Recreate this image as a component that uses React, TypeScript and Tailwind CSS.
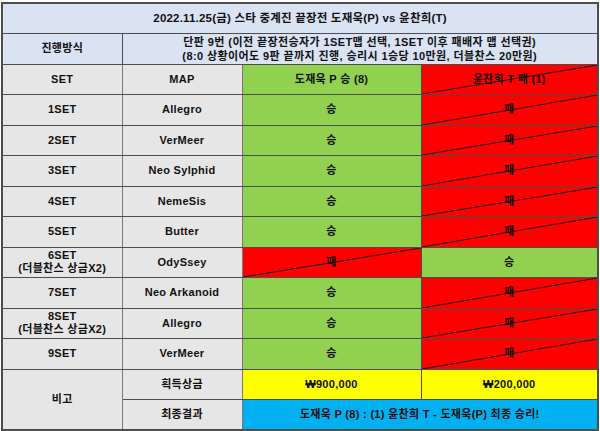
const font = "font-['Liberation_Sans','Noto_Sans_CJK_KR',sans-serif]";

const sets = [
  { set: "1SET", map: "Allegro", win: true },
  { set: "2SET", map: "VerMeer", win: true },
  { set: "3SET", map: "Neo Sylphid", win: true },
  { set: "4SET", map: "NemeSis", win: true },
  { set: "5SET", map: "Butter", win: true },
  { set: "6SET", map: "OdySsey", win: false, note: "(더블찬스 상금X2)" },
  { set: "7SET", map: "Neo Arkanoid", win: true },
  { set: "8SET", map: "Allegro", win: true, note: "(더블찬스 상금X2)" },
  { set: "9SET", map: "VerMeer", win: true },
];

const cell = "border border-[#4d4d4d] text-center align-middle p-0";
const gray = `${cell} bg-[#e7e6e6] border-x-[#7a7a7a]`;

const Slash = () => (
  <svg className="absolute inset-0 w-full h-full" preserveAspectRatio="none" viewBox="0 0 100 100">
    <line x1="0" y1="100" x2="100" y2="0" stroke="#1a1a1a" strokeWidth="1" vectorEffect="non-scaling-stroke" />
  </svg>
);

const Lose = ({ children }: { children: React.ReactNode }) => (
  <td className={`${cell} bg-[#ff0000] relative`}>
    <Slash />
    <span className="relative">{children}</span>
  </td>
);

const Win = ({ children }: { children: React.ReactNode }) => (
  <td className={`${cell} bg-[#92d050]`}>{children}</td>
);

export default function App() {
  return (
    <div className={`w-[600px] h-[431px] bg-white pt-[2px] pl-[1px] ${font}`}>
      <table className="w-[596px] table-fixed border-collapse border-2 border-[#4d4d4d] text-[11px] font-bold text-[#111] tracking-[0.3px]">
        <colgroup>
          <col className="w-[120px]" />
          <col className="w-[120px]" />
          <col className="w-[179px]" />
          <col className="w-[177px]" />
        </colgroup>
        <tbody>
          <tr className="h-[30px]">
            <td colSpan={4} className={`${cell} bg-[#dae3f3] text-[11.5px] tracking-[0.2px]`}>
              2022.11.25(금) 스타 중계진 끝장전 도재욱(P) vs 윤찬희(T)
            </td>
          </tr>
          <tr className="h-[31px]">
            <td className={`${cell} bg-[#dae3f3]`}>진행방식</td>
            <td colSpan={3} className={`${cell} bg-[#dae3f3] leading-[14px] tracking-[0.4px]`}>
              단판 9번 (이전 끝장전승자가 1SET맵 선택, 1SET 이후 패배자 맵 선택권)
              <br />
              (8:0 상황이어도 9판 끝까지 진행, 승리시 1승당 10만원, 더블찬스 20만원)
            </td>
          </tr>
          <tr className="h-[30px]">
            <td className={gray}>SET</td>
            <td className={gray}>MAP</td>
            <Win>도재욱 P 승 (8)</Win>
            <Lose>윤찬희 T 패 (1)</Lose>
          </tr>
          {sets.map((s, i) => (
            <tr key={s.set} className={i % 2 === 0 ? "h-[31px]" : "h-[30px]"}>
              <td className={`${gray} leading-[13px]`}>
                {s.set}
                {s.note && (
                  <>
                    <br />
                    {s.note}
                  </>
                )}
              </td>
              <td className={gray}>{s.map}</td>
              {s.win ? <Win>승</Win> : <Lose>패</Lose>}
              {s.win ? <Lose>패</Lose> : <Win>승</Win>}
            </tr>
          ))}
          <tr className="h-[30px]">
            <td rowSpan={2} className={gray}>비고</td>
            <td className={gray}>획득상금</td>
            <td className={`${cell} bg-[#ffff00]`}>₩900,000</td>
            <td className={`${cell} bg-[#ffff00]`}>₩200,000</td>
          </tr>
          <tr className="h-[31px]">
            <td className={gray}>최종결과</td>
            <td colSpan={2} className={`${cell} bg-[#00b0f0]`}>
              도재욱 P (8) : (1) 윤찬희 T - 도재욱(P) 최종 승리!
            </td>
          </tr>
        </tbody>
      </table>
    </div>
  );
}
